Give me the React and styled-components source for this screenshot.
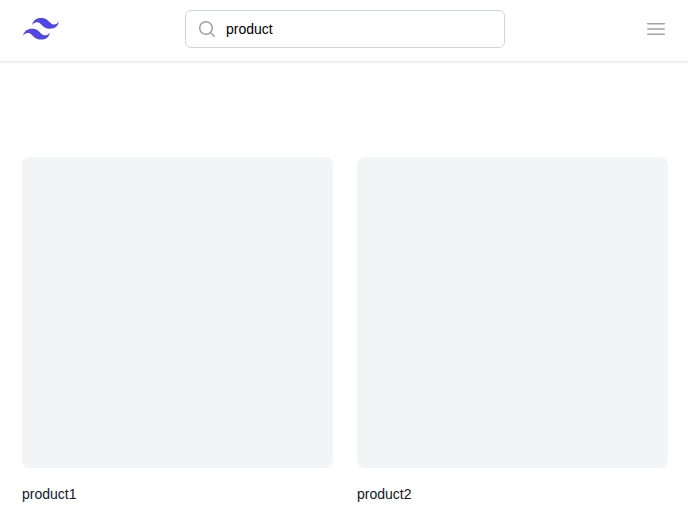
import React from "react";
import styled, { createGlobalStyle } from "styled-components";

const GlobalStyle = createGlobalStyle`
  *, *::before, *::after { box-sizing: border-box; }
  html, body { margin: 0; padding: 0; background: #fff; }
  body {
    font-family: "Liberation Sans", Arial, sans-serif;
    color: #111827;
  }
`;

const Header = styled.header`
  display: grid;
  grid-template-columns: 1fr 320px 1fr;
  align-items: center;
  height: 61px;
  padding: 0 20px 3px 22px;
  background: #fff;
  box-shadow: 0 1px 3px 0 rgba(0, 0, 0, 0.1), 0 1px 2px -1px rgba(0, 0, 0, 0.1);
`;

const Logo = styled.svg`
  display: block;
  width: 38px;
  height: 32px;
`;

const SearchBox = styled.label`
  display: flex;
  align-items: center;
  gap: 9px;
  height: 38px;
  padding: 0 11px;
  border: 1px solid #d1d5db;
  border-radius: 6px;
  background: #fff;
`;

const SearchIcon = styled.svg`
  flex: none;
  width: 20px;
  height: 20px;
  fill: #9ca3af;
`;

const MenuIcon = styled.svg`
  display: block;
  width: 24px;
  height: 24px;
  fill: none;
  stroke: #9ca3af;
  stroke-width: 1.5;
  stroke-linecap: round;
  stroke-linejoin: round;
`;

const SearchInput = styled.input`
  flex: 1;
  min-width: 0;
  padding: 0;
  border: 0;
  outline: 0;
  background: transparent;
  font: 14px/20px "Liberation Sans", Arial, sans-serif;
  color: #000;
`;

const MenuButton = styled.button`
  justify-self: end;
  padding: 0;
  border: 0;
  background: transparent;
`;

const ProductGrid = styled.main`
  display: grid;
  grid-template-columns: 1fr 1fr;
  gap: 24px;
  padding: 96px 20px 0 22px;
`;

const ProductImage = styled.div`
  aspect-ratio: 1;
  border-radius: 8px;
  background: #f3f4f6;
`;

const ProductName = styled.h3`
  margin: 16px 0 0;
  font-size: 14px;
  line-height: 20px;
  font-weight: 400;
`;

const products = ["product1", "product2"];

export default function App() {
  return (
    <>
      <GlobalStyle />
      <Header>
        <Logo viewBox="0 0 38 32" aria-label="Home">
          <path
            transform="translate(1 5) scale(0.6667)"
            fill="#4f46e5"
            d="M27 0c-7.2 0-11.7 3.6-13.5 10.8 2.7-3.6 5.85-4.95 9.45-4.05 2.054.513 3.522 2.004 5.147 3.653C30.744 13.09 33.808 16.2 40.5 16.2c7.2 0 11.7-3.6 13.5-10.8-2.7 3.6-5.85 4.95-9.45 4.05-2.054-.513-3.522-2.004-5.147-3.653C36.756 3.11 33.692 0 27 0zM13.5 16.2C6.3 16.2 1.8 19.8 0 27c2.7-3.6 5.85-4.95 9.45-4.05 2.054.514 3.522 2.004 5.147 3.653C17.244 29.29 20.308 32.4 27 32.4c7.2 0 11.7-3.6 13.5-10.8-2.7 3.6-5.85 4.95-9.45 4.05-2.054-.513-3.522-2.004-5.147-3.653C23.256 19.31 20.192 16.2 13.5 16.2z"
          />
        </Logo>
        <SearchBox>
          <SearchIcon viewBox="0 0 20 20" aria-hidden="true">
            <path
              fillRule="evenodd"
              clipRule="evenodd"
              d="M9 3.5a5.5 5.5 0 1 0 0 11 5.5 5.5 0 0 0 0-11ZM2 9a7 7 0 1 1 12.452 4.391l3.328 3.329a.75.75 0 1 1-1.06 1.06l-3.329-3.328A7 7 0 0 1 2 9Z"
            />
          </SearchIcon>
          <SearchInput type="text" defaultValue="product" />
        </SearchBox>
        <MenuButton aria-label="Open menu">
          <MenuIcon viewBox="0 0 24 24">
            <path d="M3.75 6.75h16.5M3.75 12h16.5m-16.5 5.25h16.5" />
          </MenuIcon>
        </MenuButton>
      </Header>
      <ProductGrid>
        {products.map((name) => (
          <article key={name}>
            <ProductImage />
            <ProductName>{name}</ProductName>
          </article>
        ))}
      </ProductGrid>
    </>
  );
}
